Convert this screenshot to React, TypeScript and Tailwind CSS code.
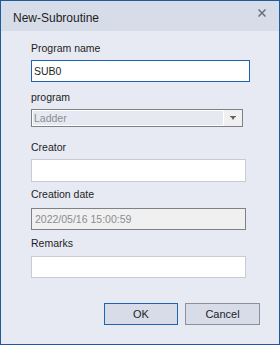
import React from "react";

const font = { fontFamily: '"Liberation Sans", Arial, sans-serif' };

export default function App() {
  return (
    <div
      className="w-[280px] h-[345px] border border-[#1d5b9c] bg-[#e7eaf3] flex flex-col text-[10.5px] text-[#1e1e1e]"
      style={font}
    >
      <div className="h-[30px] bg-[#d6dce8] flex items-center justify-between pl-[12px] pr-[13px] shrink-0">
        <span className="leading-[16px] mt-[3px] text-[12px]">New-Subroutine</span>
        <svg width="8" height="8" viewBox="0 0 8 8" className="mb-[7px]">
          <path d="M0.5 0.5 L7.5 7.5 M7.5 0.5 L0.5 7.5" stroke="#6b6f78" strokeWidth="1.5" />
        </svg>
      </div>
      <div className="flex flex-col pl-[30px]">
        <div className="mt-[9px] leading-[16px] h-[16px]">Program name</div>
        <div className="mt-[4px] w-[219px] h-[22px] border border-[#1d64b0] bg-white flex items-center pl-[2px] leading-[16px]">
          SUB0
        </div>
        <div className="mt-[7px] leading-[16px] h-[16px]">program</div>
        <div className="mt-[4px] w-[212px] h-[18px] border border-[#7e8188] bg-white flex">
          <div className="flex-1 bg-[#e6e9f1] border border-white flex items-center pl-[1px] text-[#8a8d92] leading-[14px]">
            Ladder
          </div>
          <div className="w-[18px] bg-[#f0f0f0] flex items-center justify-center">
            <svg width="6" height="4" viewBox="0 0 6 4">
              <path d="M0 0 H6 V1 H5 L3 4 L1 1 H0 Z" fill="#5f6368" />
            </svg>
          </div>
        </div>
        <div className="mt-[12px] leading-[16px] h-[16px]">Creator</div>
        <div className="mt-[4px] w-[215px] h-[23px] border border-[#c8cbd1] bg-white" />
        <div className="mt-[4px] leading-[16px] h-[16px]">Creation date</div>
        <div className="mt-[6px] w-[215px] h-[22px] border border-[#7e8188] bg-[#f0f0f0] flex items-center pl-[3px] text-[#8a8d92] leading-[16px]">
          2022/05/16 15:00:59
        </div>
        <div className="mt-[5px] leading-[16px] h-[16px]">Remarks</div>
        <div className="mt-[5px] w-[215px] h-[22px] border border-[#c8cbd1] bg-white" />
        <div className="mt-[25px] flex pl-[73px] gap-[7px]">
          <div className="w-[74px] h-[22px] border border-[#1d64b0] bg-[#d7dce8] flex items-center justify-center leading-[16px] text-[11px]">
            OK
          </div>
          <div className="w-[75px] h-[22px] border border-[#8c9099] bg-[#d7dce8] flex items-center justify-center leading-[16px] text-[11px]">
            Cancel
          </div>
        </div>
      </div>
    </div>
  );
}
